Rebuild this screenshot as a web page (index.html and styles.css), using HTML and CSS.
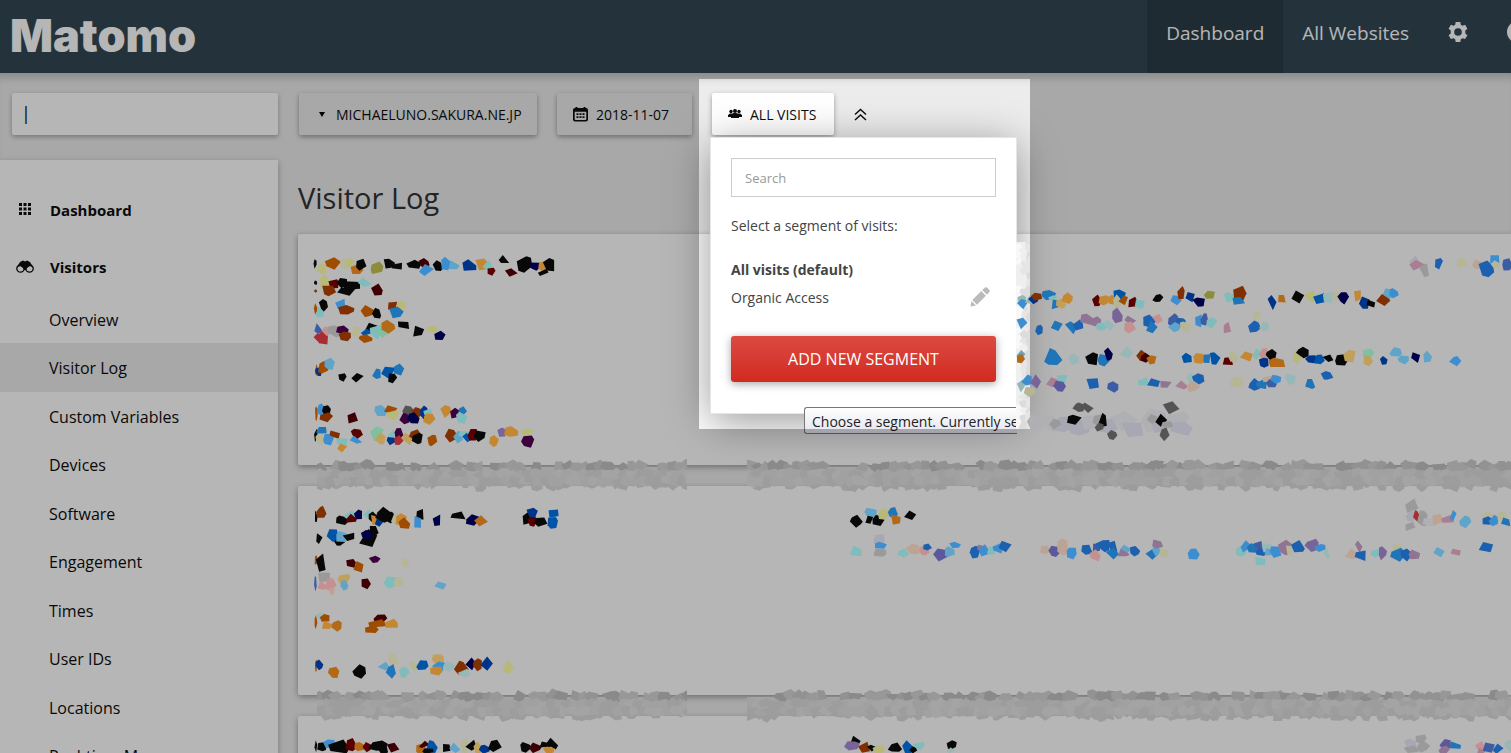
FILE: index.html
```html
<!doctype html>
<html lang="en">
<head>
    <title>Visitor Log - Matomo</title>
    <meta charset="utf-8" />
    <meta name="viewport" content="width=device-width, initial-scale=1" />
    <link rel="stylesheet" href="styles.css">
</head>

<body>
<header class="topbar">
	<a class="logo" href="#">Matomo</a>
	<nav class="topnav">
		<a class="active" href="#">Dashboard</a>
		<a href="#">All Websites</a>
		<a class="icon-link" href="#" aria-label="Administration">
			<svg width="22" height="22" viewBox="0 0 22 22"><path fill="currentColor" fill-rule="evenodd" d="M8.700 1h4.600l.5 2.700 1.700 1 2.600-.9 2.300 3.900-2.100 1.800v2.900l2.100 1.800-2.300 3.900-2.600-.9-1.700 1-.5 2.800H8.700l-.5-2.800-1.700-1-2.600.9-2.300-3.900 2.100-1.800V9.500L1.600 7.700l2.300-3.900 2.600.9 1.700-1zM11 7.200a3.800 3.800 0 1 0 0 7.600 3.800 3.800 0 0 0 0-7.600z"/></svg>
		</a>
		<a class="icon-link" href="#" aria-label="Help">
			<svg width="22" height="22" viewBox="0 0 22 22"><circle cx="11" cy="11" r="11" fill="currentColor"/></svg>
		</a>
	</nav>
</header>

<div class="page">
	<aside class="sidebar">
		<input class="quick-search" type="text" value="|" aria-label="Quick search">
		<nav class="menu">
			<a class="menu-head" href="#">
				<svg width="18" height="14" viewBox="0 0 18 14"><path fill="currentColor" d="M3 0h3v3H3zM7.500 0h3v3h-3zM12 0h3v3h-3zM3 4.500h3v3H3zM7.500 4.500h3v3h-3zM12 4.500h3v3h-3zM3 9h3v3H3zM7.500 9h3v3h-3zM12 9h3v3h-3z"/></svg>
				Dashboard
			</a>
			<a class="menu-head" href="#">
				<svg width="18" height="14" viewBox="0 0 18 14"><path fill="currentColor" d="M4 2l3-1.500 2 1 2-1L14 2l3.500 6-3.500-2-3 2-1 2H8L7 8 4 6 .5 8z"/><circle cx="4.500" cy="8.500" r="3.700" fill="none" stroke="currentColor" stroke-width="1.300"/><circle cx="13.500" cy="8.500" r="3.700" fill="none" stroke="currentColor" stroke-width="1.300"/></svg>
				Visitors
			</a>
			<ul>
				<li><a href="#">Overview</a></li>
				<li class="active"><a href="#">Visitor Log</a></li>
				<li><a href="#">Custom Variables</a></li>
				<li><a href="#">Devices</a></li>
				<li><a href="#">Software</a></li>
				<li><a href="#">Engagement</a></li>
				<li><a href="#">Times</a></li>
				<li><a href="#">User IDs</a></li>
				<li><a href="#">Locations</a></li>
				<li><a href="#">Real-time Map</a></li>
			</ul>
		</nav>
	</aside>

	<main>
		<div class="controls">
			<button class="control site" type="button"><span class="caret"></span>michaeluno.sakura.ne.jp</button>
			<button class="control date" type="button">
				<svg width="15" height="15" viewBox="0 0 15 15"><path fill="currentColor" fill-rule="evenodd" d="M2.500 0h2v1h6V0h2v1H13a2 2 0 0 1 2 2v9.500a2 2 0 0 1-2 2H2a2 2 0 0 1-2-2V3a2 2 0 0 1 2-2h.5zM1.700 4.800V12a1 1 0 0 0 1 1h9.600a1 1 0 0 0 1-1V4.800zM3.500 6.300h2V8h-2zM6.500 6.300h2V8h-2zM9.500 6.300h2V8h-2zM3.500 9.200h2v1.700h-2zM6.500 9.200h2v1.700h-2zM9.500 9.200h2v1.700h-2z"/></svg>
				2018-11-07
			</button>
			<div class="segment">
				<button class="control all-visits" type="button">
					<svg width="14" height="10" viewBox="0 0 14 10"><g fill="currentColor"><circle cx="3" cy="2.500" r="1.700"/><circle cx="11" cy="2.500" r="1.700"/><circle cx="7" cy="2" r="2"/><path d="M0 8V6l2-1.500h10L14 6v2zM3 9V6l2.500-2h3L11 6v3z"/></g></svg>
					All visits
				</button>
				<div class="spotlight"></div>
				<div class="segment-panel">
					<input type="text" placeholder="Search" aria-label="Search">
					<p>Select a segment of visits:</p>
					<ul>
						<li><a class="current" href="#">All visits (default)</a></li>
						<li>
							<a href="#">Organic Access</a>
							<svg width="20" height="20" viewBox="0 0 20 20"><path fill="#bbb" d="M.5 19.500l1-5.500L6 18.500zM2.300 13L11.200 4.100l4.700 4.700L7 17.700zM12.200 3.100L15 .6q1-.8 2 0L19.400 3q.8 1 0 2l-2.500 2.800z"/></svg>
						</li>
					</ul>
					<button class="add" type="button">Add new segment</button>
				</div>
				<div class="tooltip" role="tooltip">Choose a segment. Currently se</div>
			</div>
			<button class="collapse" type="button" aria-label="Collapse">
				<svg width="13" height="13" viewBox="0 0 13 13"><path fill="none" stroke="currentColor" stroke-width="1.500" d="M1 6.500l5.500-5 5.500 5M1 12l5.500-5 5.500 5"/></svg>
			</button>
		</div>

		<h1>Visitor Log</h1>
		<div class="log">
			<section class="card visit-long"></section>
			<section class="card visit-short"></section>
			<section class="card visit-long"></section>
			<svg class="mosaic" id="mosaic" aria-hidden="true"></svg>
		</div>
	</main>
</div>

<script src="mosaic.js"></script>
</body>
</html>
```
FILE: styles.css
```css
* {
	box-sizing: border-box;
}
body {
	margin: 0;
	height: 100vh;
	overflow: hidden;
	background: #ececec;
	color: #0d0d0d;
	font-family: "Open Sans", "Noto Sans", sans-serif;
	font-size: 16px;
}
a {
	color: inherit;
	text-decoration: none;
}
ul {
	list-style: none;
	margin: 0;
	padding: 0;
}
button, input {
	font-family: inherit;
	color: inherit;
}

/* top bar */
.topbar {
	display: flex;
	justify-content: space-between;
	height: 73px;
	overflow: hidden;
	background: #314753;
	color: #fff;
}
.logo {
	padding-left: 10px;
	font: 900 45px/72px Inter, sans-serif;
}
.topnav {
	display: flex;
	margin-right: -37px;
	font-size: 19px;
	line-height: 66px;
}
.topnav a {
	padding: 0 19px;
}
.topnav .active {
	background: #2c3d46;
}
.topnav .icon-link {
	padding: 21px 19px 0;
	line-height: 0;
}

.page {
	display: flex;
	padding-top: 20px;
	box-shadow: inset 0 10px 10px -6px rgba(0,0,0,.2);
}

/* left column */
.sidebar {
	flex: none;
	width: 278px;
}
.quick-search {
	display: block;
	width: 266px;
	height: 42px;
	margin-left: 12px;
	padding: 0 9px 3px;
	border: 0;
	border-radius: 2px;
	background: #fff;
	box-shadow: 0 2px 5px rgba(0,0,0,.3);
	font-size: 18px;
}
.menu {
	margin-top: 25px;
	padding-top: 21px;
	background: #fff;
	box-shadow: 0 2px 6px rgba(0,0,0,.3);
}
.menu-head {
	display: flex;
	align-items: center;
	gap: 16px;
	height: 57px;
	padding-left: 16px;
	font-size: 15px;
	font-weight: bold;
}
.menu li {
	height: 48px;
	padding-left: 49px;
	line-height: 51px;
}
.menu li:nth-child(even) {
	height: 49px;
}
.menu .active {
	background: #ececec;
}

/* selectors over the report */
main {
	flex: 1;
	min-width: 0;
	padding-left: 20px;
}
.controls {
	display: flex;
	gap: 20px;
	padding-left: 1px;
}
.control {
	display: flex;
	align-items: center;
	gap: 8px;
	height: 42px;
	padding: 0 16px;
	border: 0;
	border-radius: 2px;
	background: #ececec;
	box-shadow: 0 2px 5px rgba(0,0,0,.35);
	font-size: 14px;
	text-transform: uppercase;
	white-space: nowrap;
}
.site {
	width: 238px;
	gap: 11px;
	padding-left: 20px;
}
.date {
	width: 135px;
}
.caret {
	border: 3px solid transparent;
	border-top: 5px solid #000;
	border-bottom: 0;
}
.segment {
	position: relative;
	z-index: 2;
}
.all-visits {
	width: 122px;
	background: #fff;
}
.collapse {
	padding: 4px 0 0;
	border: 0;
	background: none;
	position: relative;
	z-index: 1;
}

/* dims the rest of the page around the open selector */
.spotlight {
	position: absolute;
	z-index: 3;
	top: -14px;
	left: -13px;
	width: 331px;
	height: 350px;
	box-shadow: 0 0 0 2000px rgba(0,0,0,.285);
	pointer-events: none;
}
.segment-panel {
	position: absolute;
	top: 44px;
	left: -2px;
	width: 307px;
	height: 277px;
	padding: 20px;
	border: 1px solid #e6e6e6;
	background: #fff;
	box-shadow: 0 8px 40px rgba(0,0,0,.4);
	color: #444;
	font-size: 14px;
}
.segment-panel input {
	display: block;
	width: 100%;
	height: 39px;
	padding: 0 13px;
	border: 1px solid #ccc;
	font-size: 13px;
}
.segment-panel input::placeholder {
	color: #999;
}
.segment-panel p {
	margin: 19px 0;
	line-height: 20px;
}
.segment-panel li {
	display: flex;
	justify-content: space-between;
	align-items: center;
	height: 28px;
	padding-right: 6px;
}
.current {
	font-weight: bold;
}
.add {
	width: 100%;
	height: 46px;
	margin-top: 25px;
	border: 0;
	border-radius: 3px;
	background: linear-gradient(#db4a42, #d22a20);
	box-shadow: 0 2px 8px rgba(0,0,0,.35);
	color: #fff;
	font-size: 16px;
	text-transform: uppercase;
}
.tooltip {
	position: absolute;
	top: 314px;
	left: 92px;
	width: 213px;
	height: 27px;
	padding-left: 7px;
	border: 1px solid #767676;
	border-right: 0;
	border-radius: 3px 0 0 3px;
	background: linear-gradient(#fff, #e4e5f0);
	color: #222;
	font-size: 14px;
	line-height: 27px;
	white-space: nowrap;
}

/* report */
h1 {
	margin: 39px 0 12px;
	font-size: 29px;
	font-weight: 400;
	line-height: 48px;
	color: #333;
}
.log {
	position: relative;
}
.card {
	margin-bottom: 21px;
	border-radius: 2px 0 0 2px;
	background: #fff;
	box-shadow: 0 2px 6px rgba(0,0,0,.35);
}
.visit-long {
	height: 231px;
}
.visit-short {
	height: 209px;
}
.mosaic {
	position: absolute;
	z-index: 3;
	top: 0;
	left: 0;
	width: 100%;
	height: 100%;
	pointer-events: none;
}
```
FILE: mosaic.js
```js
// Scrambled visitor details: every cell is "x y width height colour",
// on a grid three times finer than the page.
var colors = {
	k: '#080808', o: '#a04c00', b: '#803000', r: '#5a0000', R: '#3e0005',
	a: '#b36a18', c: '#c48833', d: '#c0a05a', y: '#b8b878', s: '#b6b696', O: '#8c8c3c',
	t: '#80bcbc', T: '#98b8b8', l: '#60a4c8', L: '#3c8ed0', m: '#2074b8', B: '#0054a8',
	n: '#003488', N: '#000048', u: '#1c60b0', v: '#3c5ca4', p: '#5c589c', P: '#786498',
	w: '#907494', q: '#c49090', Q: '#a87e90', f: '#bca494', g: '#9a9a9a', G: '#545454',
	h: '#a8a8b4', x: '#3c003c', X: '#a82c30', e: '#80c0a0', z: '#b0b0b4'
};

var groups = [
	{x: -8, y: -4, cells: [
		'76 100 8 26 k,97 116 32 32 y,130 100 42 34 o,163 103 28 28 s,180 98 26 28 y,198 120 34 26 a,214 104 28 30 k,258 114 34 32 O,298 100 32 28 k,322 110 34 24 k,374 104 38 24 k,402 100 28 24 R,408 120 38 30 L,443 108 30 28 k,464 104 30 36 L,491 106 30 26 l,538 109 36 32 n,577 103 46 34 c,592 108 28 34 t,605 124 22 26 r,642 88 30 26 k,661 128 38 26 R,704 102 42 46 k,737 107 32 26 N,757 108 26 28 c,778 104 32 40 k,760 128 30 22 k',
		'77 158 8 12 k,77 183 8 10 b,106 158 32 38 y,132 162 30 28 r,116 180 38 30 b,155 158 30 30 k,184 166 48 38 k,170 184 46 24 k,225 158 34 26 t,261 180 30 34 R',
		'77 237 8 36 o,101 224 24 34 k,90 250 20 34 t,155 223 34 32 L,167 241 42 24 b,231 246 36 32 o,260 250 24 30 k,308 228 32 24 b,334 226 26 26 y,318 248 38 28 m',
		'84 298 24 28 v,84 322 20 20 X,98 322 34 42 X,112 302 26 26 q,134 302 36 34 g,158 301 34 24 x,165 318 30 28 b,199 308 30 34 s,246 294 34 28 k,231 308 34 24 B,229 326 34 22 o,260 305 34 40 t,280 302 32 38 e,295 290 34 36 a,341 287 32 36 k,382 305 32 34 k,426 298 32 22 y,451 318 34 28 N',
		'79 420 8 38 o,86 426 18 26 n,99 414 32 32 o,117 402 32 30 l,156 440 24 26 k,201 443 34 28 k,261 432 28 30 m,297 426 38 32 B,305 446 26 28 k,326 418 32 32 m',
		'79 551 8 38 o,94 541 26 34 L,110 542 22 30 k,108 562 36 24 b,187 565 36 32 R,272 543 34 30 l,305 540 36 24 o,308 555 34 26 y,356 544 30 34 G,379 546 28 28 b,344 567 30 30 x,372 566 34 30 N,401 548 24 36 n,413 546 28 26 t,418 565 34 30 c,467 542 32 34 c,496 551 30 30 x,517 543 22 26 m,514 565 34 30 t',
		'80 619 14 40 k,93 602 28 26 m,90 625 24 32 s,115 626 32 32 L,134 612 26 30 b,157 631 30 30 t,155 652 26 24 c,201 612 30 30 r,196 630 34 24 L,263 612 36 38 e,272 627 28 32 d,305 614 26 28 t,304 632 28 22 n,326 612 22 30 x,326 632 24 26 X,351 627 32 32 d,374 616 34 30 b,382 624 32 32 k,426 632 28 30 o,484 618 38 34 b,504 620 30 34 l,524 614 32 30 t,531 624 26 24 B,550 616 28 36 r,570 616 32 32 k,612 631 26 32 c,634 608 28 26 P,664 605 40 30 c,711 607 34 22 y,713 633 34 34 x'
	]},
	{x: -8, y: 216, cells: [
		'78 199 8 34 k,94 188 28 32 b,158 212 36 26 k,180 198 28 26 t,184 208 30 26 r,206 196 28 30 N,232 190 26 24 t,247 200 24 30 k,256 206 26 36 c,268 216 28 26 n,284 194 46 36 k,304 202 24 34 k,320 206 28 36 s,333 208 32 32 c,342 222 30 32 o,393 193 32 30 k,382 216 32 30 L,441 212 26 36 N,506 198 44 28 k,548 211 34 34 N,573 213 34 28 a,710 206 26 44 k,728 190 34 32 n,727 214 28 28 r,752 214 36 30 k,791 190 36 30 B,789 216 32 34 B',
		'87 264 20 28 k,127 256 36 34 B,148 276 28 22 k,156 262 34 30 l,178 260 34 30 k,236 266 48 48 k,252 242 26 30 k,232 254 30 28 N',
		'78 333 8 36 o,92 338 30 46 k,182 339 32 26 R,206 354 26 34 o,254 328 30 22 x,346 338 24 26 s',
		'76 400 8 46 v,102 378 38 38 g,94 408 26 32 q,120 402 32 30 q,125 422 22 24 f,162 386 32 30 d,164 406 24 26 l,227 401 30 28 R,302 397 34 36 t,326 396 26 30 s,451 406 30 24 l',
		'78 516 8 36 o,91 498 22 20 T,105 505 28 26 o,109 526 32 28 c,141 528 32 28 a,270 508 36 28 R,262 522 60 28 o,246 538 40 20 o,306 521 36 30 c',
		'78 646 6 36 o,88 645 20 30 n,130 667 30 32 a,207 665 38 34 k,310 628 28 34 s,281 650 34 24 l,304 664 28 36 m,343 667 30 32 t,370 647 30 26 s,397 646 30 34 B,444 629 32 30 d,448 650 36 28 L,440 662 34 24 c,476 650 34 24 T,513 653 36 34 b,541 641 26 34 N,564 643 26 34 b,591 643 34 38 n,522 668 38 26 T,653 652 32 40 y',
		'78 890 8 30 k,96 890 30 24 k,121 882 34 28 L,148 892 54 40 k,183 886 34 36 r,209 892 28 28 a,231 890 24 28 r,266 888 54 28 k,281 902 26 34 k,308 892 34 28 R,392 896 32 30 a,402 884 32 22 R,426 890 32 32 B,414 904 30 20 k,468 892 30 24 k,494 894 32 30 l,524 890 28 38 s,546 886 30 30 k,562 894 22 32 d,584 898 30 22 n,614 888 32 38 k,706 892 30 32 k,735 891 32 30 R,764 886 34 26 k,788 880 32 34 k,776 900 34 22 c'
	]},
	{x: 712, y: -4, cells: [
		'1214 94 28 34 h,1222 106 38 28 Q,1246 120 32 34 g,1286 100 26 32 u,1355 97 32 28 s,1403 104 34 28 f,1430 118 44 44 u,1456 90 34 28 L,1458 104 26 24 s,1492 104 28 34 v',
		'36 210 26 30 T,40 222 30 24 L,58 210 24 30 T,68 208 28 24 n,83 200 30 22 b,116 196 38 26 m,128 206 24 20 t,135 222 26 30 m,155 220 28 28 d,173 205 32 28 c,260 214 26 32 r,282 210 28 26 c,306 210 28 26 c,327 194 34 26 B,321 216 24 36 s,342 210 28 28 o,368 218 26 30 r,388 223 30 28 t,444 205 28 24 k,498 212 34 26 L,513 188 22 34 b,539 201 26 30 n,568 217 36 28 N,600 195 32 22 O,658 200 34 28 t,688 192 36 42 b,686 214 36 26 m,787 218 26 38 n,816 206 32 22 a,862 200 38 36 k,902 200 36 30 y,930 206 34 34 B,957 202 30 34 T,980 200 26 24 s,1000 202 28 34 N,1043 198 24 32 c,1062 219 30 34 n,1084 221 26 22 k,1121 210 34 28 b,1136 192 34 28 l,1151 190 28 30 L',
		'36 278 34 30 L,87 298 22 28 u,138 288 34 32 m,183 292 36 34 m,205 286 30 28 u,229 267 34 30 w,256 275 30 26 w,276 289 32 24 t,295 287 32 28 T,322 258 28 38 P,359 270 30 28 w,359 292 34 30 q,418 276 42 36 u,441 268 30 28 q,426 290 32 32 m,490 272 28 36 v,512 276 32 26 u,494 292 34 24 l,526 290 34 32 s,567 272 26 34 L,583 270 24 34 v,606 277 32 32 t,652 294 22 38 Q,740 255 22 22 s,733 292 32 30 u,762 290 28 26 T',
		'32 374 22 28 l,31 386 24 24 a,130 384 44 48 m,191 387 32 30 T,247 388 34 34 k,279 391 34 36 m,295 374 26 36 N,352 368 34 32 T,396 378 32 30 b,407 384 28 28 R,424 390 30 28 a,530 384 30 28 B,566 386 30 34 c,589 386 28 30 m,613 385 28 34 B,655 395 30 32 r,671 380 28 30 s,708 380 38 28 c,740 372 30 26 t,764 374 28 32 q,784 374 30 30 k,762 398 28 28 n,800 398 52 28 a,862 382 26 42 y,879 366 34 28 k,907 388 38 24 n,928 388 32 30 B,955 384 32 22 k,992 392 34 32 k,1020 378 36 34 d,1074 370 32 30 e,1072 392 28 30 d,1122 392 22 22 n,1156 368 34 28 l,1180 388 30 26 l,1216 382 26 32 N,1253 382 24 32 l,1337 394 30 26 L',
		'36 468 24 34 T,50 452 32 28 L,60 484 30 26 s,78 456 30 36 P,130 459 34 26 Q,157 443 28 30 t,149 468 32 32 p,249 457 38 34 u,311 471 32 32 v,402 458 36 34 t,430 461 34 26 u,466 462 38 20 w,516 466 34 26 Q,542 446 24 34 T,565 447 30 34 u,548 470 34 30 f,681 459 40 30 s,734 466 30 34 u,756 466 32 32 m,774 446 32 26 f,786 460 30 26 v,798 449 28 26 L,840 447 34 34 T,901 462 26 32 m,952 437 32 24 u',
		'80 575 50 36 z,120 578 50 44 z,160 585 60 44 h,210 594 70 44 h,250 575 70 44 z,290 590 70 44 h,340 575 70 50 z,370 594 70 44 h,430 570 70 60 z,450 584 60 40 h,500 570 60 50 z,510 594 60 44 h,206 532 36 22 G,232 532 30 30 G,190 570 46 28 k,136 582 32 28 g,264 570 30 34 g,280 573 30 38 k,268 592 28 20 G,306 614 26 28 G,484 534 46 34 G,428 568 32 28 g,453 572 32 36 k,472 584 32 22 g,465 612 28 34 G'
	]},
	{x: 442, y: 216, cells: [
		'348 214 32 38 k,393 190 36 30 l,390 210 26 22 k,416 210 36 30 k,432 192 36 30 y,458 188 28 30 m,466 210 34 32 a,513 196 32 30 k',
		'348 307 32 36 t,420 268 40 28 h,421 287 40 22 L,421 308 36 28 g,490 310 32 26 t,522 300 40 28 f,553 302 30 26 q,562 291 24 20 u,603 312 36 36 p,628 303 30 28 l,646 286 32 18 L,706 306 30 34 u,722 296 22 26 w,733 302 30 32 L,753 304 26 28 t,774 295 32 32 L,797 288 34 28 u,914 300 32 28 f,943 303 34 30 p,966 290 34 50 f,994 310 32 34 L,1041 300 34 30 u,1068 291 24 26 v,1092 288 44 34 u,1122 292 38 32 u,1065 317 30 30 q,1115 312 36 30 m,1150 308 34 24 w,1158 298 30 22 l,1184 303 30 30 u,1236 313 36 28 m,1250 303 28 30 l,1252 283 28 28 w,1272 308 26 28 s,1360 311 30 34 L',
		'345 872 26 34 k,336 886 38 26 P,374 890 38 30 b,396 894 24 20 k,416 900 32 26 y,466 894 38 26 k,504 894 34 38 B,520 898 20 26 k,536 887 34 26 t,635 884 28 26 k,632 902 24 16 T'
	]},
	{x: 812, y: 216, cells: [
		'906 170 40 42 g,904 200 34 30 h,900 228 28 30 g,920 200 22 34 X,938 204 30 46 g,956 214 32 26 z,982 211 34 34 f,1012 210 34 30 Q,1030 197 24 28 L,1067 215 34 30 l,1133 197 32 22 s,1130 214 32 26 u,1154 212 30 28 L,1176 199 28 28 s,1187 217 28 26 m',
		'392 304 30 30 t,408 290 30 32 L,426 295 26 28 m,443 291 28 34 v,452 308 30 26 u,468 292 28 28 T,475 308 26 24 l,452 332 32 30 t,496 306 32 32 L,525 295 34 42 w,538 302 26 32 s,565 291 40 32 u,608 286 38 36 P,632 294 30 24 L,650 312 20 34 T,720 312 36 32 f,745 288 20 34 w,752 316 32 34 u,796 310 28 26 t,817 309 24 34 P,860 294 34 30 s,866 314 44 32 m,888 314 30 32 u,912 315 32 26 w,988 307 28 30 l,1037 306 28 26 Q,1127 292 36 34 u',
		'902 882 38 34 h,932 868 34 28 g,904 898 40 24 g,938 890 34 32 g,1008 886 30 34 p,1002 900 32 22 w,1036 886 34 22 m,1112 888 28 26 q,1112 904 24 16 Q,1136 894 32 34 v,1162 898 30 26 u,1198 888 26 34 T'
	]}
];

var svg = document.getElementById('mosaic');
var seed = 7;
var out = '';

function rand() {
	seed = (seed * 16807) % 2147483647;
	return seed / 2147483647;
}

// an uneven polygon that fills the box round x, y
function cell(x, y, w, h, color) {
	var n = 4 + Math.floor(rand() * 3);
	var start = rand() * 6;
	var points = [];
	for (var i = 0; i < n; i++) {
		var angle = start + (i + rand() * 0.6) * 2 * Math.PI / n;
		var r = 0.48 + rand() * 0.2;
		points.push((x + Math.cos(angle) * w * r).toFixed(1) + ',' + (y + Math.sin(angle) * h * r).toFixed(1));
	}
	out += '<polygon points="' + points.join(' ') + '" fill="' + color + '"/>';
}

// the grey strip of cells that hides the space between two cards
function band(x1, x2, y) {
	var x;
	var dark = ['#8a8a8a', '#929292', '#989898'];
	var light = ['#9d9d9d', '#a1a1a1', '#a4a4a4'];
	out += '<svg x="' + x1 + '" y="' + (y - 8) + '" width="' + (x2 - x1) + '" height="40"><g transform="translate(0 8)">';
	out += '<rect y="2" width="100%" height="17" fill="#a3a3a3"/>';
	for (x = 3; x < x2 - x1 + 6; x += 8) {
		if (rand() < 0.75) cell(x, rand() * 3, 13, 10, dark[Math.floor(rand() * 3)]);
		if (rand() < 0.6) cell(x, 18 + rand() * 4, 11, 9, '#9c9c9c');
	}
	for (x = 3; x < x2 - x1 + 6; x += 8) {
		cell(x, 8 + rand() * 2, 13, 9, light[Math.floor(rand() * 3)]);
		cell(x + 3, 15 + rand() * 2, 13, 10, light[Math.floor(rand() * 3)]);
	}
	out += '</g></svg>';
}

// pale cells along the right edge of the segment panel
function edge(x, y1, y2) {
	var pale = ['#dcdcdc', '#e6e6e6', '#efefef', '#f8f8f8'];
	out += '<svg x="' + x + '" y="' + y1 + '" width="14" height="' + (y2 - y1) + '">';
	for (var y = 0; y < y2 - y1; y += 7) {
		cell(2, y, 9, 11, pale[2 + Math.floor(rand() * 2)]);
		cell(8, y + 3, 9, 11, pale[Math.floor(rand() * 3)]);
		cell(14, y, 9, 11, pale[Math.floor(rand() * 2)]);
	}
	out += '</svg>';
}

[231, 461].forEach(function (y) {
	band(19, 389, y);
	band(449, Math.max(1213, svg.clientWidth), y);
});
edge(718, 8, 195);

groups.forEach(function (group) {
	out += '<g transform="translate(' + group.x + ' ' + group.y + ') scale(.3333)">';
	group.cells.join(',').split(',').forEach(function (item) {
		var p = item.split(' ');
		cell(+p[0], +p[1], +p[2], +p[3], colors[p[4]]);
	});
	out += '</g>';
});

svg.innerHTML = out;
```
